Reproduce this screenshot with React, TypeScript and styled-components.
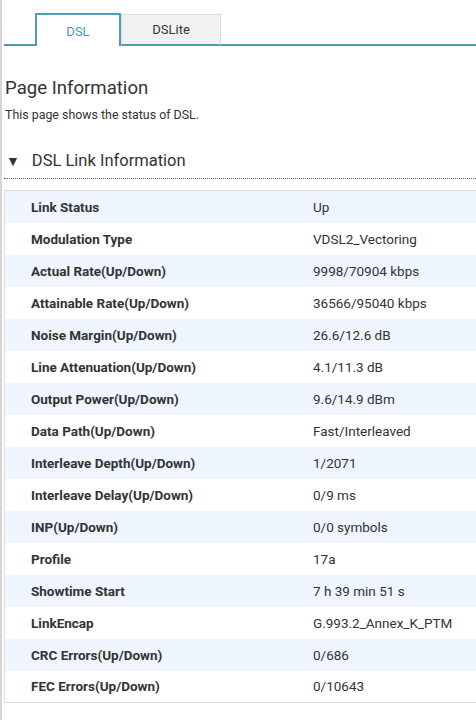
import * as React from 'react';
import styled, { createGlobalStyle } from 'styled-components';

const GlobalStyle = createGlobalStyle`
  html, body {
    margin: 0;
    padding: 0;
    background: #fff;
    overflow: hidden;
  }
  body {
    font-family: Roboto, "Liberation Sans", Arial, sans-serif;
    color: #333;
  }
`;

const rows: [string, string][] = [
  ['Link Status', 'Up'],
  ['Modulation Type', 'VDSL2_Vectoring'],
  ['Actual Rate(Up/Down)', '9998/70904 kbps'],
  ['Attainable Rate(Up/Down)', '36566/95040 kbps'],
  ['Noise Margin(Up/Down)', '26.6/12.6 dB'],
  ['Line Attenuation(Up/Down)', '4.1/11.3 dB'],
  ['Output Power(Up/Down)', '9.6/14.9 dBm'],
  ['Data Path(Up/Down)', 'Fast/Interleaved'],
  ['Interleave Depth(Up/Down)', '1/2071'],
  ['Interleave Delay(Up/Down)', '0/9 ms'],
  ['INP(Up/Down)', '0/0 symbols'],
  ['Profile', '17a'],
  ['Showtime Start', '7 h 39 min 51 s'],
  ['LinkEncap', 'G.993.2_Annex_K_PTM'],
  ['CRC Errors(Up/Down)', '0/686'],
  ['FEC Errors(Up/Down)', '0/10643'],
];

const App: React.FC = () => {
  return (
    <Frame>
      <GlobalStyle />
      <Content>
        <TabBar>
          <TabSpacer />
          <Tab active>DSL</Tab>
          <Tab>DSLite</Tab>
          <TabRest />
        </TabBar>

        <PageTitle>Page Information</PageTitle>
        <PageDesc>This page shows the status of DSL.</PageDesc>

        <SectionHead>
          <Arrow>▼</Arrow>
          DSL Link Information
        </SectionHead>

        <InfoTable>
          <tbody>
            {rows.map(([label, value], i) => (
              <Row key={label} odd={i % 2 === 0}>
                <Label>{label}</Label>
                <Value>{value}</Value>
              </Row>
            ))}
          </tbody>
        </InfoTable>
      </Content>
    </Frame>
  );
};

const Frame = styled.div`
  width: 560px;
  height: 720px;
  border-left: 2px solid #d6d6d6;
  box-sizing: border-box;
`;

const Content = styled.div`
  padding-left: 2px;
`;

const TabBar = styled.div`
  display: flex;
  align-items: flex-end;
  height: 46px;
`;

const TabSpacer = styled.div`
  width: 31px;
  border-bottom: 2px solid #4a9fb5;
`;

const TabRest = styled.div`
  flex: 1;
  border-bottom: 2px solid #4a9fb5;
`;

const Tab = styled.div<{ active?: boolean }>`
  box-sizing: border-box;
  display: flex;
  align-items: center;
  justify-content: center;
  font-size: 13px;
  height: ${(p) => (p.active ? '33px' : '32px')};
  width: ${(p) => (p.active ? '86px' : '100px')};
  color: ${(p) => (p.active ? '#3c9bb3' : '#333')};
  background: ${(p) => (p.active ? '#fff' : '#f2f2f2')};
  border: ${(p) => (p.active ? '2px solid #4a9fb5' : '1px solid #dcdcdc')};
  border-bottom: ${(p) => (p.active ? 'none' : '2px solid #4a9fb5')};
  padding-top: ${(p) => (p.active ? '1px' : '0')};
`;

const PageTitle = styled.h1`
  margin: 30px 0 0 1px;
  font-size: 18.6px;
  font-weight: 400;
  line-height: 24px;
  color: #333;
`;

const PageDesc = styled.p`
  margin: 7px 0 0 1px;
  font-size: 12.4px;
  line-height: 16px;
  color: #333;
`;

const SectionHead = styled.h2`
  display: flex;
  align-items: center;
  margin: 26px 0 0;
  padding: 0 0 5px 2px;
  font-size: 16.5px;
  font-weight: 400;
  line-height: 24px;
  color: #333;
  border-bottom: 1px dotted #666;
`;

const Arrow = styled.span`
  font-size: 14px;
  margin-right: 12px;
  color: #333;
`;

const InfoTable = styled.table`
  margin-top: 11px;
  width: 100%;
  border-collapse: collapse;
  border: 1px solid #dcdcdc;
  font-size: 13.5px;
`;

const Row = styled.tr<{ odd: boolean }>`
  height: 32px;
  background: ${(p) => (p.odd ? '#eef5fc' : '#fff')};
`;

const Label = styled.td`
  width: 282px;
  padding: 0 0 0 26px;
  font-weight: 700;
  color: #333;
`;

const Value = styled.td`
  padding: 0;
  color: #333;
`;

export default App;
